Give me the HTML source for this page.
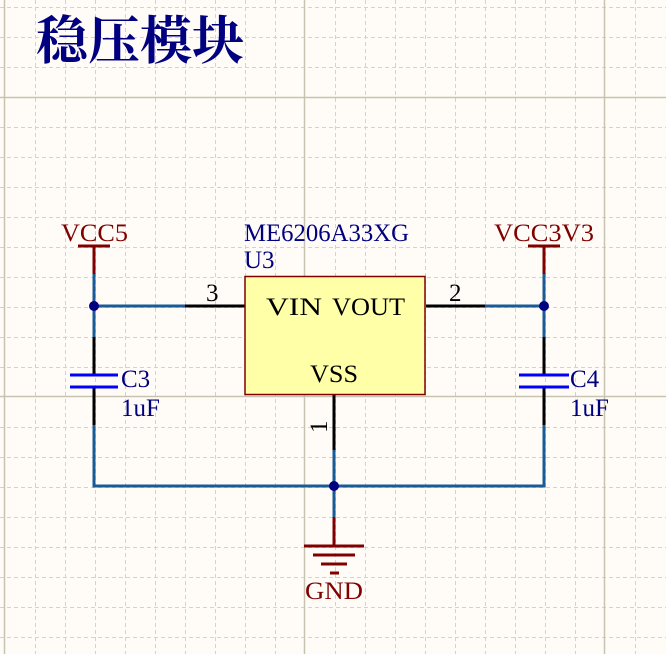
<!DOCTYPE html>
<html><head><meta charset="utf-8"><style>
html,body{margin:0;padding:0;background:#fffcf8;}
svg{display:block}
text{font-family:"Liberation Serif","Noto Serif CJK SC",serif;}
</style></head><body>
<svg width="666" height="654" viewBox="0 0 666 654" xmlns="http://www.w3.org/2000/svg">
<rect width="666" height="654" fill="#fffcf8"/>
<g stroke="#d8d2bf" stroke-width="1" stroke-dasharray="4,3">
<path d="M35.5 0V654M65.5 0V654M95.5 0V654M125.5 0V654M155.5 0V654M185.5 0V654M215.5 0V654M245.5 0V654M275.5 0V654M335.5 0V654M365.5 0V654M395.5 0V654M425.5 0V654M455.5 0V654M485.5 0V654M515.5 0V654M545.5 0V654M575.5 0V654M635.5 0V654"/>
<path d="M0 7.5H666M0 37.5H666M0 67.5H666M0 127.5H666M0 157.5H666M0 187.5H666M0 217.5H666M0 247.5H666M0 277.5H666M0 307.5H666M0 337.5H666M0 367.5H666M0 427.5H666M0 457.5H666M0 487.5H666M0 517.5H666M0 547.5H666M0 577.5H666M0 607.5H666M0 637.5H666"/>
</g>
<g stroke="#c8c2b0" stroke-width="1.5">
<path d="M4.5 0V654M304.5 0V654M604.5 0V654M0 97.5H666M0 396.5H666"/>
</g>
<text x="36" y="59" font-size="52" font-weight="bold" fill="#000080" font-family="'Noto Serif CJK SC','Noto Sans CJK SC',serif">稳压模块</text>

<g stroke-width="3" fill="none">
<path d="M78 246H110M94 246V274" stroke="#800000"/>
<path d="M94 274V337M94 306H185" stroke="#1a5a96"/>
<path d="M94 337V375M94 387V425M185 306H245" stroke="#000"/>
<path d="M70 375H118M70 387H118" stroke="#0000ff"/>
<path d="M94 425V486H544V425M334 486V450M334 486V517" stroke="#1a5a96"/>
<path d="M528 246H560M544 246V274" stroke="#800000"/>
<path d="M544 274V337M544 306H485" stroke="#1a5a96"/>
<path d="M544 337V375M544 387V425M485 306H426" stroke="#000"/>
<path d="M519 375H569M519 387H569" stroke="#0000ff"/>
<path d="M334 395V450" stroke="#000"/>
<path d="M334 517V546M304 546H364M313 555H355M321 564H347M330 573H339" stroke="#800000"/>
</g>
<circle cx="94" cy="306" r="5" fill="#000080"/>
<circle cx="544" cy="306" r="5" fill="#000080"/>
<circle cx="334" cy="486" r="5" fill="#000080"/>
<rect x="245" y="276.5" width="180" height="118" fill="#ffffa8" stroke="#800000" stroke-width="1.5"/>

<g font-size="25">
<text x="61" y="241" fill="#800000" textLength="67" lengthAdjust="spacingAndGlyphs">VCC5</text>
<text x="494" y="241" fill="#800000" textLength="100" lengthAdjust="spacingAndGlyphs">VCC3V3</text>
<text x="305" y="599" fill="#800000" textLength="58" lengthAdjust="spacingAndGlyphs">GND</text>
<text x="244" y="241" fill="#000080" textLength="165" lengthAdjust="spacingAndGlyphs">ME6206A33XG</text>
<text x="244" y="268" fill="#000080">U3</text>
<text x="121" y="387" fill="#000080">C3</text>
<text x="121" y="416" fill="#000080">1uF</text>
<text x="570" y="387" fill="#000080">C4</text>
<text x="570" y="416" fill="#000080">1uF</text>
<text x="266" y="315" fill="#000" textLength="56" lengthAdjust="spacingAndGlyphs">VIN</text>
<text x="332" y="315" fill="#000" textLength="73" lengthAdjust="spacingAndGlyphs">VOUT</text>
<text x="310" y="382" fill="#000" textLength="48" lengthAdjust="spacingAndGlyphs">VSS</text>
<text x="206" y="301" fill="#000">3</text>
<text x="449" y="301" fill="#000">2</text>
<text x="0" y="0" fill="#000" transform="translate(327,433) rotate(-90)">1</text>
</g>
</svg>
</body></html>
